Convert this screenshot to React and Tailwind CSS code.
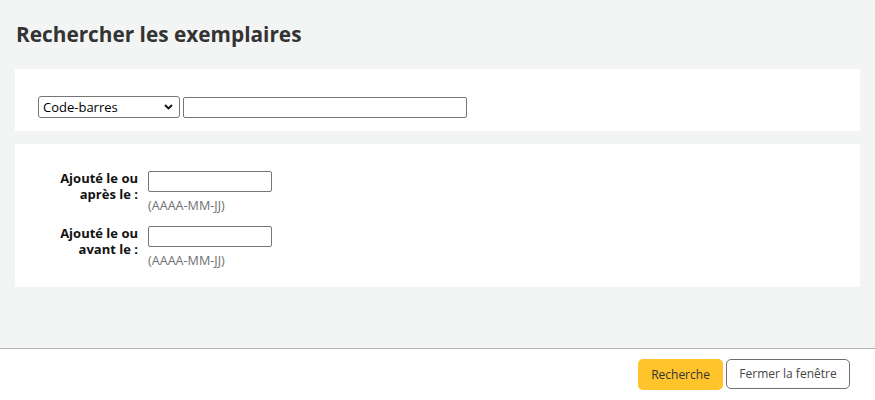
import React from "react";

const font = { fontFamily: '"Open Sans", "Liberation Sans", sans-serif' };

function DateRow({ label }) {
  return (
    <div className="flex items-start">
      <div className="w-[88px] text-right font-bold text-[13px] leading-[16px] text-[#111] pt-[1px]">
        {label}
      </div>
      <div className="ml-[10px] flex flex-col">
        <input
          type="text"
          className="mt-[2px] w-[124px] h-[21px] border border-[#767676] rounded-[2px] bg-white outline-none"
        />
        <div className="mt-[6px] text-[12.6px] leading-[16px] text-[#6f6f6f]">(AAAA-MM-JJ)</div>
      </div>
    </div>
  );
}

export default function App() {
  return (
    <div className="h-[400px] w-[875px] flex flex-col bg-[#f3f4f4]" style={font}>
      <div className="flex-1 px-[15px]">
        <h1 className="pt-[22px] pl-[1px] text-[20.8px] leading-[25px] font-bold text-[#333333]">
          Rechercher les exemplaires
        </h1>
        <div className="mt-[22px] bg-white w-[845px] pt-[27px] pb-[13px] pl-[23px] flex items-center">
          <div className="relative w-[142px] h-[22px] border border-[#767676] rounded-[3px] bg-white flex items-center">
            <span className="pl-[4px] text-[13px] text-black leading-none">Code-barres</span>
            <svg
              className="absolute right-[6px] top-[6px]"
              width="9"
              height="8"
              viewBox="0 0 9 8"
            >
              <path d="M1 2 L4.5 5.5 L8 2" stroke="#111" strokeWidth="1.8" fill="none" />
            </svg>
          </div>
          <input
            type="text"
            className="ml-[3px] mt-[1px] w-[284px] h-[21px] border border-[#767676] rounded-[2px] bg-white outline-none"
          />
        </div>
        <div className="mt-[13px] bg-white w-[845px] pt-[25px] pb-[18px] pl-[35px] flex flex-col gap-[10px]">
          <DateRow label="Ajouté le ou après le :" />
          <DateRow label="Ajouté le ou avant le :" />
        </div>
      </div>
      <div className="h-[52px] bg-white border-t border-[#b3b3b3] flex items-start justify-end pr-[25px] pt-[10px] gap-[3px]">
        <button className="w-[85px] h-[31px] rounded-[5px] bg-[#ffc32b] text-[12px] text-[#333]">
          Recherche
        </button>
        <button className="w-[124px] h-[30px] rounded-[5px] bg-white border border-[#6f6f6f] text-[12px] text-[#444]">
          Fermer la fenêtre
        </button>
      </div>
    </div>
  );
}
